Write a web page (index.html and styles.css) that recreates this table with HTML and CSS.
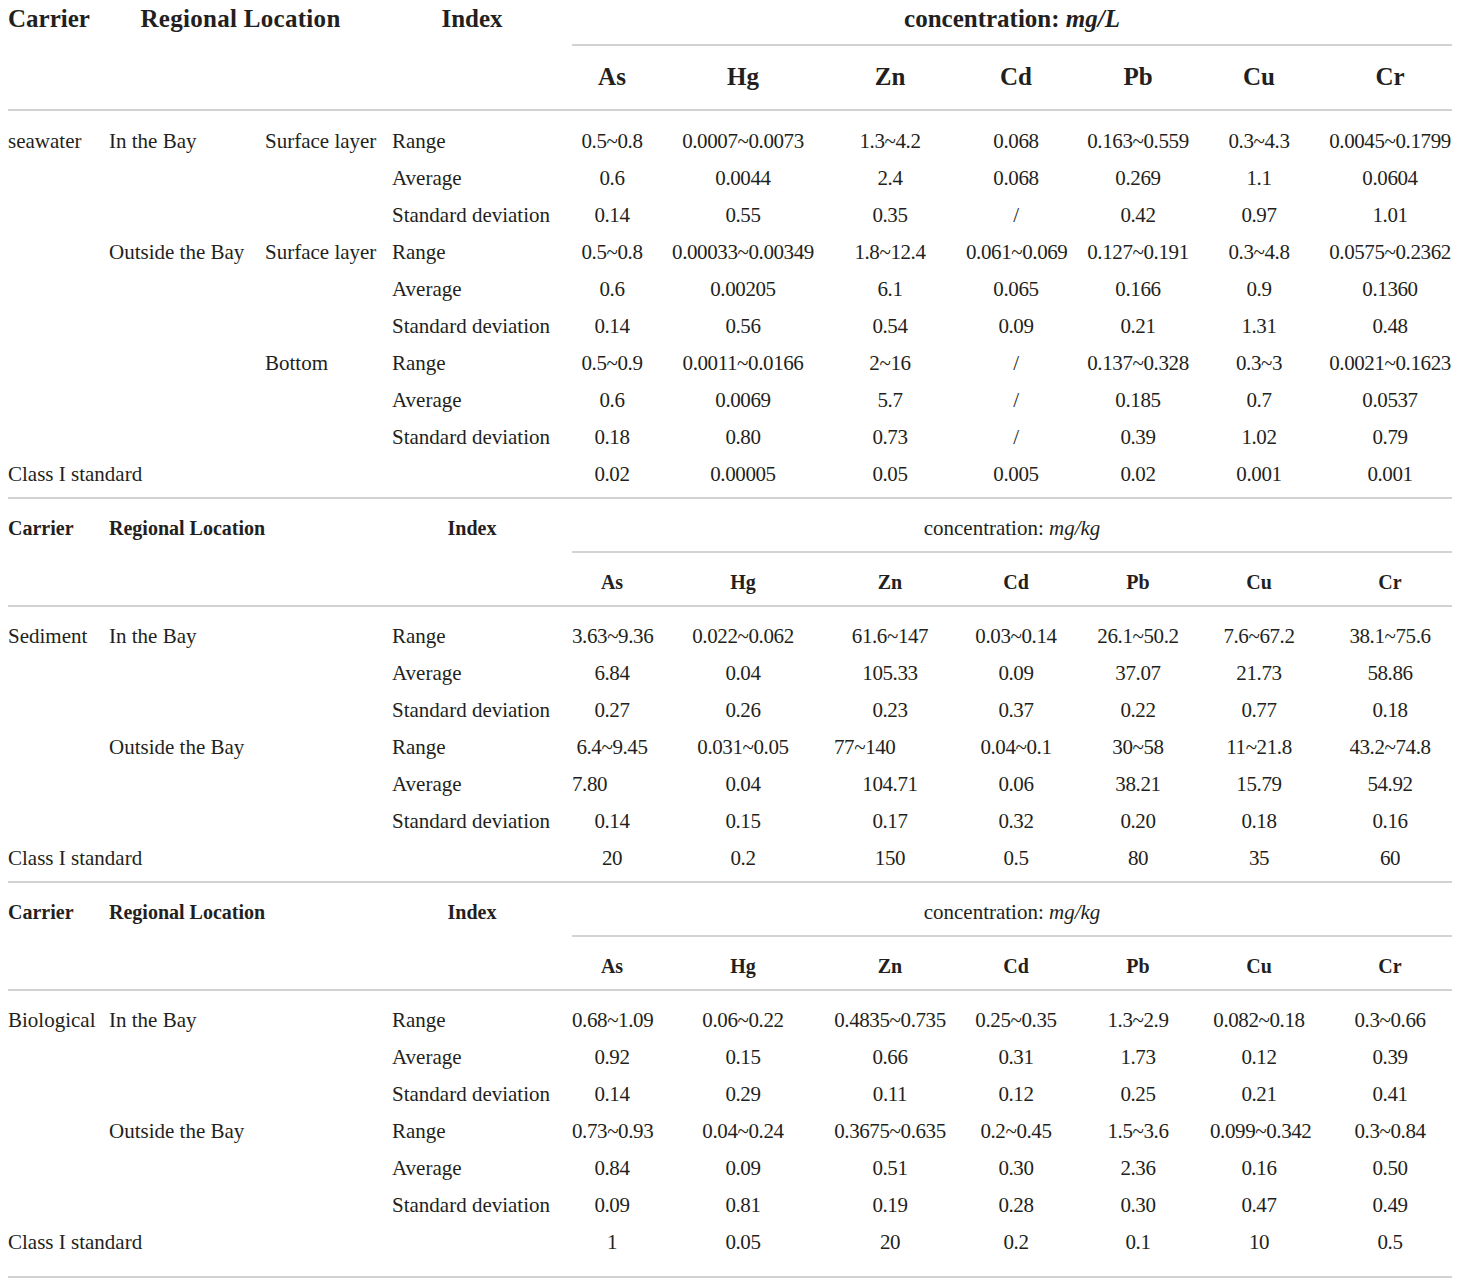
FILE: index.html
```html
<!DOCTYPE html>
<html lang="en">
<head>
<meta charset="utf-8">
<title>Heavy metal concentrations</title>
<link rel="stylesheet" href="styles.css">
</head>
<body>
<table class="data">
  <colgroup>
    <col class="w-carrier"><col class="w-region"><col class="w-sub"><col class="w-index">
    <col class="w-as"><col class="w-hg"><col class="w-zn"><col class="w-cd"><col class="w-pb"><col class="w-cu"><col class="w-cr">
  </colgroup>
  <tbody class="sec s1">
    <tr class="h1">
      <th class="rs l" rowspan="2">Carrier</th>
      <th class="rs" rowspan="2" colspan="2">Regional Location</th>
      <th class="rs" rowspan="2">Index</th>
      <th class="conc" colspan="7">concentration: <i>mg/L</i></th>
    </tr>
    <tr class="h2">
      <th>As</th><th>Hg</th><th>Zn</th><th>Cd</th><th>Pb</th><th>Cu</th><th>Cr</th>
    </tr>
    <tr class="first">
      <td class="l">seawater</td><td class="l">In the Bay</td><td class="l">Surface layer</td><td class="l">Range</td>
      <td class="n">0.5~0.8</td><td class="n">0.0007~0.0073</td><td class="n">1.3~4.2</td><td class="n">0.068</td><td class="n">0.163~0.559</td><td class="n">0.3~4.3</td><td class="n">0.0045~0.1799</td>
    </tr>
    <tr>
      <td></td><td></td><td></td><td class="l">Average</td>
      <td class="n">0.6</td><td class="n">0.0044</td><td class="n">2.4</td><td class="n">0.068</td><td class="n">0.269</td><td class="n">1.1</td><td class="n">0.0604</td>
    </tr>
    <tr>
      <td></td><td></td><td></td><td class="l">Standard deviation</td>
      <td class="n">0.14</td><td class="n">0.55</td><td class="n">0.35</td><td class="n">/</td><td class="n">0.42</td><td class="n">0.97</td><td class="n">1.01</td>
    </tr>
    <tr>
      <td></td><td class="l">Outside the Bay</td><td class="l">Surface layer</td><td class="l">Range</td>
      <td class="n">0.5~0.8</td><td class="n">0.00033~0.00349</td><td class="n">1.8~12.4</td><td class="n">0.061~0.069</td><td class="n">0.127~0.191</td><td class="n">0.3~4.8</td><td class="n">0.0575~0.2362</td>
    </tr>
    <tr>
      <td></td><td></td><td></td><td class="l">Average</td>
      <td class="n">0.6</td><td class="n">0.00205</td><td class="n">6.1</td><td class="n">0.065</td><td class="n">0.166</td><td class="n">0.9</td><td class="n">0.1360</td>
    </tr>
    <tr>
      <td></td><td></td><td></td><td class="l">Standard deviation</td>
      <td class="n">0.14</td><td class="n">0.56</td><td class="n">0.54</td><td class="n">0.09</td><td class="n">0.21</td><td class="n">1.31</td><td class="n">0.48</td>
    </tr>
    <tr>
      <td></td><td></td><td class="l">Bottom</td><td class="l">Range</td>
      <td class="n">0.5~0.9</td><td class="n">0.0011~0.0166</td><td class="n">2~16</td><td class="n">/</td><td class="n">0.137~0.328</td><td class="n">0.3~3</td><td class="n">0.0021~0.1623</td>
    </tr>
    <tr>
      <td></td><td></td><td></td><td class="l">Average</td>
      <td class="n">0.6</td><td class="n">0.0069</td><td class="n">5.7</td><td class="n">/</td><td class="n">0.185</td><td class="n">0.7</td><td class="n">0.0537</td>
    </tr>
    <tr>
      <td></td><td></td><td></td><td class="l">Standard deviation</td>
      <td class="n">0.18</td><td class="n">0.80</td><td class="n">0.73</td><td class="n">/</td><td class="n">0.39</td><td class="n">1.02</td><td class="n">0.79</td>
    </tr>
    <tr class="last">
      <td class="l" colspan="4">Class I standard</td>
      <td class="n">0.02</td><td class="n">0.00005</td><td class="n">0.05</td><td class="n">0.005</td><td class="n">0.02</td><td class="n">0.001</td><td class="n">0.001</td>
    </tr>
  </tbody>

  <tbody class="sec s2">
    <tr class="h1">
      <th class="rs l" rowspan="2">Carrier</th>
      <th class="rs l" rowspan="2" colspan="2">Regional Location</th>
      <th class="rs" rowspan="2">Index</th>
      <th class="conc" colspan="7">concentration: <i>mg/kg</i></th>
    </tr>
    <tr class="h2">
      <th>As</th><th>Hg</th><th>Zn</th><th>Cd</th><th>Pb</th><th>Cu</th><th>Cr</th>
    </tr>
    <tr class="first">
      <td class="l">Sediment</td><td class="l">In the Bay</td><td></td><td class="l">Range</td>
      <td class="n">3.63~9.36</td><td class="n">0.022~0.062</td><td class="n">61.6~147</td><td class="n">0.03~0.14</td><td class="n">26.1~50.2</td><td class="n">7.6~67.2</td><td class="n">38.1~75.6</td>
    </tr>
    <tr>
      <td></td><td></td><td></td><td class="l">Average</td>
      <td class="n">6.84</td><td class="n">0.04</td><td class="n">105.33</td><td class="n">0.09</td><td class="n">37.07</td><td class="n">21.73</td><td class="n">58.86</td>
    </tr>
    <tr>
      <td></td><td></td><td></td><td class="l">Standard deviation</td>
      <td class="n">0.27</td><td class="n">0.26</td><td class="n">0.23</td><td class="n">0.37</td><td class="n">0.22</td><td class="n">0.77</td><td class="n">0.18</td>
    </tr>
    <tr>
      <td></td><td class="l">Outside the Bay</td><td></td><td class="l">Range</td>
      <td class="n">6.4~9.45</td><td class="n">0.031~0.05</td><td class="n l">77~140</td><td class="n">0.04~0.1</td><td class="n">30~58</td><td class="n">11~21.8</td><td class="n">43.2~74.8</td>
    </tr>
    <tr>
      <td></td><td></td><td></td><td class="l">Average</td>
      <td class="n l">7.80</td><td class="n">0.04</td><td class="n">104.71</td><td class="n">0.06</td><td class="n">38.21</td><td class="n">15.79</td><td class="n">54.92</td>
    </tr>
    <tr>
      <td></td><td></td><td></td><td class="l">Standard deviation</td>
      <td class="n">0.14</td><td class="n">0.15</td><td class="n">0.17</td><td class="n">0.32</td><td class="n">0.20</td><td class="n">0.18</td><td class="n">0.16</td>
    </tr>
    <tr class="last">
      <td class="l" colspan="4">Class I standard</td>
      <td class="n">20</td><td class="n">0.2</td><td class="n">150</td><td class="n">0.5</td><td class="n">80</td><td class="n">35</td><td class="n">60</td>
    </tr>
  </tbody>

  <tbody class="sec s3">
    <tr class="h1">
      <th class="rs l" rowspan="2">Carrier</th>
      <th class="rs l" rowspan="2" colspan="2">Regional Location</th>
      <th class="rs" rowspan="2">Index</th>
      <th class="conc" colspan="7">concentration: <i>mg/kg</i></th>
    </tr>
    <tr class="h2">
      <th>As</th><th>Hg</th><th>Zn</th><th>Cd</th><th>Pb</th><th>Cu</th><th>Cr</th>
    </tr>
    <tr class="first">
      <td class="l">Biological</td><td class="l">In the Bay</td><td></td><td class="l">Range</td>
      <td class="n">0.68~1.09</td><td class="n">0.06~0.22</td><td class="n">0.4835~0.735</td><td class="n">0.25~0.35</td><td class="n">1.3~2.9</td><td class="n">0.082~0.18</td><td class="n">0.3~0.66</td>
    </tr>
    <tr>
      <td></td><td></td><td></td><td class="l">Average</td>
      <td class="n">0.92</td><td class="n">0.15</td><td class="n">0.66</td><td class="n">0.31</td><td class="n">1.73</td><td class="n">0.12</td><td class="n">0.39</td>
    </tr>
    <tr>
      <td></td><td></td><td></td><td class="l">Standard deviation</td>
      <td class="n">0.14</td><td class="n">0.29</td><td class="n">0.11</td><td class="n">0.12</td><td class="n">0.25</td><td class="n">0.21</td><td class="n">0.41</td>
    </tr>
    <tr>
      <td></td><td class="l">Outside the Bay</td><td></td><td class="l">Range</td>
      <td class="n">0.73~0.93</td><td class="n">0.04~0.24</td><td class="n">0.3675~0.635</td><td class="n">0.2~0.45</td><td class="n">1.5~3.6</td><td class="n">0.099~0.342</td><td class="n">0.3~0.84</td>
    </tr>
    <tr>
      <td></td><td></td><td></td><td class="l">Average</td>
      <td class="n">0.84</td><td class="n">0.09</td><td class="n">0.51</td><td class="n">0.30</td><td class="n">2.36</td><td class="n">0.16</td><td class="n">0.50</td>
    </tr>
    <tr>
      <td></td><td></td><td></td><td class="l">Standard deviation</td>
      <td class="n">0.09</td><td class="n">0.81</td><td class="n">0.19</td><td class="n">0.28</td><td class="n">0.30</td><td class="n">0.47</td><td class="n">0.49</td>
    </tr>
    <tr class="last">
      <td class="l" colspan="4">Class I standard</td>
      <td class="n">1</td><td class="n">0.05</td><td class="n">20</td><td class="n">0.2</td><td class="n">0.1</td><td class="n">10</td><td class="n">0.5</td>
    </tr>
  </tbody>
</table>
</body>
</html>
```

FILE: styles.css
```css
html, body {
  margin: 0;
  background: #ffffff;
}

body {
  padding: 0 8px;
  color: #231f20;
  font-family: "Liberation Serif", "Times New Roman", serif;
}

.data {
  border-collapse: separate;
  border-spacing: 0;
  table-layout: fixed;
  width: 1444px;
  font-size: 21px;
  line-height: 37px;
}

.w-carrier { width: 101px; }
.w-region  { width: 156px; }
.w-sub     { width: 127px; }
.w-index   { width: 180px; }
.w-as      { width: 100px; }
.w-hg      { width: 162px; }
.w-zn      { width: 132px; }
.w-cd      { width: 120px; }
.w-pb      { width: 124px; }
.w-cu      { width: 118px; }
.w-cr      { width: 124px; }

.data th,
.data td {
  padding: 0 20px 0 0;
  white-space: nowrap;
  text-align: center;
  vertical-align: top;
  font-weight: normal;
}

.data tr > :last-child {
  padding-right: 0;
}

.data .l {
  text-align: left;
}

/* numeric cells: slightly tighter, like the narrow figures of the original */
.data .n {
  letter-spacing: -0.4px;
}

/* rule lines */
.data .rs,
.data .conc,
.data .h2 th,
.data .last td {
  border-bottom: 2px solid #d2d2d2;
}

/* ---------- section 1 (large header) ---------- */
.s1 .h1 th,
.s1 .h2 th {
  font-size: 25px;
  font-weight: bold;
}

.s1 .h1 th {
  padding-top: 0;
  padding-bottom: 7px;
}

.s1 .h1 .rs:nth-child(2) {
  letter-spacing: 0.3px;
}

.s1 .h2 th {
  padding-top: 12px;
  padding-bottom: 14px;
}

.s1 .first td {
  padding-top: 12px;
}

.s1 .last td {
  padding-bottom: 4px;
}

/* ---------- sections 2 and 3 ---------- */
.s2 .h1 th,
.s3 .h1 th,
.s2 .h2 th,
.s3 .h2 th {
  font-size: 20px;
  font-weight: bold;
  padding-top: 11px;
  padding-bottom: 4px;
}

.s2 .h1 .conc,
.s3 .h1 .conc {
  font-size: 21px;
  font-weight: normal;
}

.s2 .first td,
.s3 .first td {
  padding-top: 11px;
}

.s2 .last td {
  padding-bottom: 4px;
}

.s3 .last td {
  padding-bottom: 15px;
}
```
